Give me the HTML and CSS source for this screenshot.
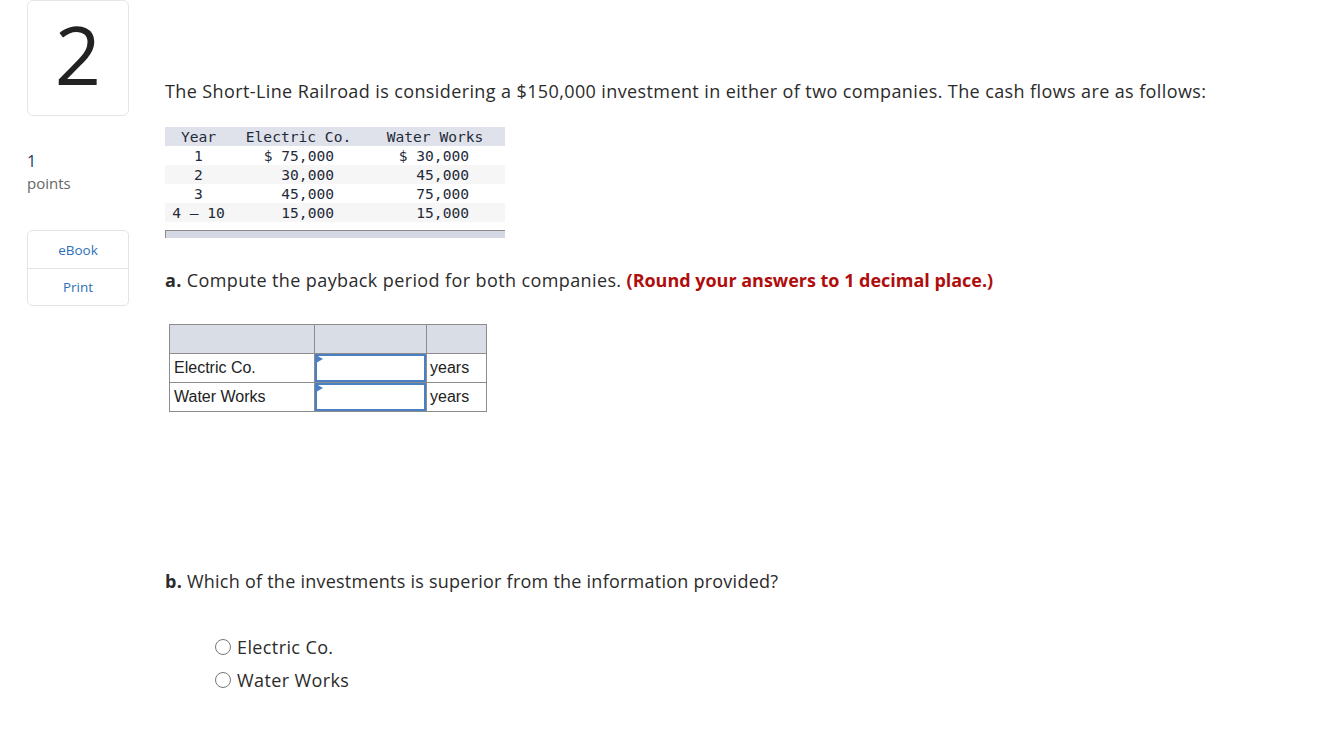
FILE: index.html
```html
<!DOCTYPE html>
<html>
<head>
<meta charset="utf-8">
<link rel="stylesheet" href="styles.css">
</head>
<body>
<div class="page">
  <aside class="side">
    <div class="qnum">2</div>
    <div class="points"><div class="pnum">1</div><div class="plabel">points</div></div>
    <div class="tools">
      <div class="tool">eBook</div>
      <div class="tool">Print</div>
    </div>
  </aside>
  <main class="main">
    <p class="intro">The Short-Line Railroad is considering a $150,000 investment in either of two companies. The cash flows are as follows:</p>
    <div class="data">
      <div class="drow head"><span class="c1">Year</span><span class="c2">Electric Co.</span><span class="c3">Water Works</span></div>
      <div class="drow"><span class="c1">1</span><span class="c2 num">$ 75,000</span><span class="c3 num">$ 30,000</span></div>
      <div class="drow alt"><span class="c1">2</span><span class="c2 num">30,000</span><span class="c3 num">45,000</span></div>
      <div class="drow"><span class="c1">3</span><span class="c2 num">45,000</span><span class="c3 num">75,000</span></div>
      <div class="drow alt"><span class="c1">4 &#8211; 10</span><span class="c2 num">15,000</span><span class="c3 num">15,000</span></div>
      <div class="dfoot"></div>
    </div>
    <p class="qa"><b>a.</b> Compute the payback period for both companies. <b class="red">(Round your answers to 1 decimal place.)</b></p>
    <table class="ans">
      <tr class="ahead"><td class="a1"></td><td class="a2"></td><td class="a3"></td></tr>
      <tr><td class="a1">Electric Co.</td><td class="a2"><div class="inp"></div></td><td class="a3">years</td></tr>
      <tr><td class="a1">Water Works</td><td class="a2"><div class="inp"></div></td><td class="a3">years</td></tr>
    </table>
    <p class="qb"><b>b.</b> Which of the investments is superior from the information provided?</p>
    <div class="opts">
      <label class="opt"><span class="radio"></span>Electric Co.</label>
      <label class="opt"><span class="radio"></span>Water Works</label>
    </div>
  </main>
</div>
</body>
</html>
```
FILE: styles.css
```css
html, body { margin: 0; padding: 0; background: #fff; }
body { font-family: "Open Sans", "Liberation Sans", sans-serif; color: #2b2b2b; }
.page { display: flex; }
.side { width: 102px; margin-left: 27px; flex: none; }
.qnum {
  border: 1px solid #e6e6e6; border-radius: 6px;
  display: flex; justify-content: center; align-items: flex-start;
  font-family: "Open Sans", sans-serif; font-size: 81px; line-height: 1; color: #222;
  padding-top: 12px; box-sizing: border-box; height: 116px;
}
.points { margin-top: 34px; font-size: 15px; line-height: 22px; }
.pnum { color: #1d3a63; font-size: 16px; }
.plabel { color: #666; margin-top: 0; }
.tools { margin-top: 36px; border: 1px solid #e3e3e3; border-radius: 5px; }
.tool { height: 37px; display: flex; align-items: center; justify-content: center; color: #2e6fb7; font-size: 13.5px; }
.tool + .tool { border-top: 1px solid #e3e3e3; height: 36px; }
.main { margin-left: 36px; flex: 1; }
.intro { margin: 79px 0 0; font-size: 18px; line-height: 24px; letter-spacing: 0.39px; }
.data { margin-top: 24px; width: 340px; font-family: "DejaVu Sans Mono", "Liberation Mono", monospace; font-size: 14.6px; color: #1f2b3a; }
.drow { display: grid; grid-template-columns: 67px 133px 140px; height: 19px; line-height: 19px; background: #fff; }
.drow.head { background: #dfe2ea; }
.drow.alt { background: #f6f6f6; }
.drow span { text-align: center; white-space: nowrap; }
.drow .c2.num { text-align: right; padding-right: 31px; }
.drow .c3.num { text-align: right; padding-right: 36px; }
.dfoot { margin-top: 8px; height: 7px; background: #d4d8e2; border-top: 1px solid #8a8a8a; border-left: 1px solid #8a8a8a; }
.qa { margin: 30px 0 0; font-size: 18px; line-height: 24px; letter-spacing: 0.39px; }
.qa b:first-child, .qb b { font-weight: 700; }
.red { color: #b00d0d; letter-spacing: -0.02px; }
.ans { margin: 32px 0 0 4px; border-collapse: collapse; font-family: "Liberation Sans", Arial, sans-serif; font-size: 16px; color: #222; }
.ans td { border: 1px solid #8c8c8c; height: 28px; padding: 0; }
.ahead td { background: #d9dde6; }
.a1 { width: 140px; padding-left: 4px !important; }
.a2 { width: 111px; position: relative; }
.a3 { width: 56px; padding-left: 3px !important; }
.inp { position: absolute; left: 0; top: 0; right: 0; bottom: 0; border: 2px solid #4b7fc4; box-sizing: border-box; }
.inp::before { content: ""; position: absolute; left: -1px; top: -1px; border-left: 7px solid #4b7fc4; border-top: 4px solid transparent; border-bottom: 4px solid transparent; }
.qb { margin: 157px 0 0; font-size: 18px; line-height: 24px; letter-spacing: 0.24px; }
.opts { margin: 42px 0 0 50px; display: flex; flex-direction: column; gap: 9px; }
.opt { display: flex; align-items: center; font-size: 18px; line-height: 24px; letter-spacing: 0.39px; }
.radio { width: 16px; height: 16px; border: 1px solid #777; border-radius: 50%; margin-right: 6px; box-sizing: border-box; }
```
